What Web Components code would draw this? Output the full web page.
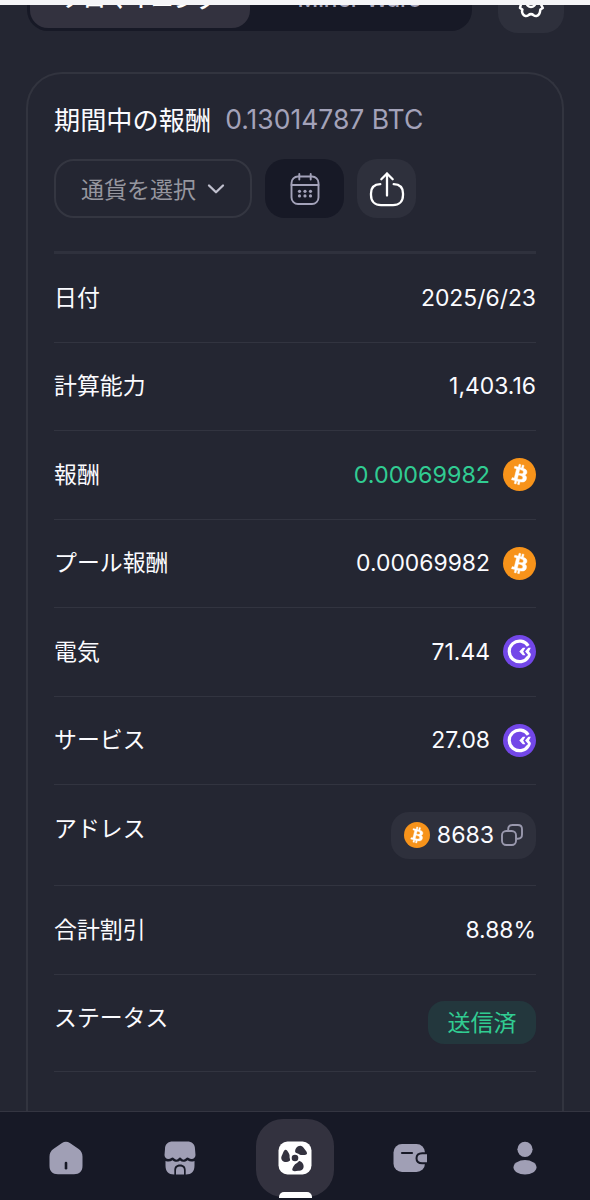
<!DOCTYPE html>
<html lang="ja">
<head>
<meta charset="utf-8">
<title>Rewards</title>
<style>
html,body{margin:0;padding:0;background:#242632}
body{width:590px;height:1200px;overflow:hidden;font-family:Inter,"Noto Sans CJK JP",sans-serif;color:#fbfbff}
</style>
</head>
<body>
<mining-app></mining-app>
<script>
const define = (name, html, init) => customElements.define(name, class extends HTMLElement {
  connectedCallback() {
    if (this.shadowRoot) return;
    const t = document.createElement('template');
    t.innerHTML = html;
    this.attachShadow({mode: 'open'}).append(t.content.cloneNode(true));
    if (init) init(this, this.shadowRoot);
  }
});

const blade = 'M17.200 11c-.4-3.200 2-6.500 5.300-6.300 2.200.2 3 1.900 4 3.300 1.200 1.600 2.700 2.800 2.500 4.800-.2 1.800-6.700 1.500-7.500.6-1.200-1.300-4-.9-4.300-2.400z';
const icons = {
  gear: ['0 0 34 34', '<path d="M14 4.500 17 7l3-2.500 5 2.400-.3 4 4 .5 1.300 5.600-3 2.400 1.800 3.600-2.400 1.500C26 25.500 26.500 27 25 29.300c-1.300 2-3.600 2.200-5.300.9-1.600-1.300-3.800-1.300-5.400 0-1.700 1.300-4 1.100-5.300-.9-1.500-2.300-1-3.800-.6-4.800L6 23l1-4-3-3 1.300-5 4-.5-.3-4z" fill="none" stroke="#fff" stroke-width="2.500" stroke-linejoin="round"/><circle cx="17" cy="17.500" r="4.500" fill="none" stroke="#fff" stroke-width="2.500"/>'],
  chevron: ['0 0 18 12', '<path d="m2 2.500 7 6.800L16 2.500" fill="none" stroke="#c0c0ce" stroke-width="2.300" stroke-linecap="round" stroke-linejoin="round"/>'],
  calendar: ['0 0 30 34', '<g fill="none" stroke="#a3a2b9" stroke-width="1.900" stroke-linecap="round"><rect x="1.500" y="4.500" width="27" height="27.500" rx="6.500"/><path d="M1.500 13h27M9.300 2v5.500M20.700 2v5.500"/></g><g fill="#a3a2b9"><circle cx="9.500" cy="19.300" r="1.600"/><circle cx="15" cy="19.300" r="1.600"/><circle cx="20.500" cy="19.300" r="1.600"/><circle cx="9.500" cy="23.900" r="1.600"/><circle cx="15" cy="23.900" r="1.600"/><circle cx="20.500" cy="23.900" r="1.600"/></g>'],
  share: ['0 0 36 36', '<path d="M18 24.500V2.500M12.300 8.300 18 2.500l5.700 5.800M11.300 13.200C5 13.400 2 17 2 22.500v1.500c0 6.500 4 10.200 10 10.200h12c6 0 10-3.700 10-10.200v-1.500c0-5.500-3-9.100-9.300-9.300" fill="none" stroke="#fff" stroke-width="2.300" stroke-linecap="round" stroke-linejoin="round"/>'],
  btc: ['0 0 32 32', '<circle cx="16" cy="16" r="16" fill="#f7931a"/><path fill="#fff" stroke="#fff" stroke-width=".45" fill-rule="evenodd" d="M23.189 14.020c.314-2.096-1.283-3.223-3.465-3.975l.708-2.840-1.728-.430-.690 2.765c-.454-.114-.920-.220-1.385-.326l.695-2.783L15.596 6l-.708 2.839c-.376-.086-.746-.170-1.104-.260l.002-.009-2.384-.595-.460 1.846s1.283.294 1.256.312c.700.175.826.638.805 1.006l-.806 3.235c.048.012.110.030.180.057l-.183-.045-1.130 4.532c-.086.212-.303.531-.793.410.018.025-1.256-.313-1.256-.313l-.858 1.978 2.250.561c.418.105.828.215 1.231.318l-.715 2.872 1.727.430.708-2.840c.472.127.930.245 1.378.357l-.706 2.828 1.728.430.715-2.866c2.948.558 5.164.333 6.097-2.333.752-2.146-.037-3.385-1.588-4.192 1.130-.260 1.980-1.003 2.207-2.538zm-3.950 5.538c-.533 2.147-4.148.986-5.320.695l.950-3.805c1.172.293 4.929.872 4.370 3.110zm.535-5.569c-.487 1.953-3.495.960-4.470.717l.860-3.450c.975.243 4.118.696 3.610 2.733z"/>'],
  coin: ['0 0 33 33', '<circle cx="16.500" cy="16.500" r="16.500" fill="#7347e8"/><path d="M25.200 10.800A10.300 10.300 0 1 0 25.300 21.800" fill="none" stroke="#fff" stroke-width="3.200"/><path d="M22.400 12.800h-2.600l-3.500 3.700 3.500 3.800h2.600l-2.200-3.800zM27.800 12.800h-2.500l-3.200 3.700 2.900 3.300-1.200 2 2.600 1.200c1-1.300 1.500-2.600 1.500-4l-1.900-2.500z" fill="#fff"/>'],
  copy: ['0 0 22 22', '<g fill="none" stroke="#9998ad" stroke-width="1.900"><path d="M7.200 6.500V5.200c0-2.700 1.500-4.200 4.200-4.200h5.400C19.500 1 21 2.500 21 5.200v5.400c0 2.700-1.500 4.200-4.200 4.200h-1.500"/><rect x="1" y="7" width="14" height="14" rx="4.200"/></g>'],
  home: ['0 0 34 34', '<path d="M13 1.900c2.500-1.500 5.400-1.500 7.900 0l8.400 5.800c2.900 2 4.200 4.400 4.200 8v9.100c0 5.500-3 8.500-8.500 8.500H9c-5.500 0-8.500-3-8.500-8.500v-9.100c0-3.600 1.300-6 4.200-8z" fill="#a09fb5"/><path d="M17 22v5.200" stroke="#171926" stroke-width="2.600" stroke-linecap="round"/>'],
  shop: ['0 0 32 34', '<path d="M9 .5h14c5 0 8 2.500 8 7.500l.5 6c0 2.300-1.500 4-4 4-2 0-3-1.500-4-1.500S21.300 18.700 19.500 18.700c-1.700 0-2.500-2.200-3.500-2.200s-1.800 2.200-3.500 2.200c-1.800 0-3-2.200-4-2.200S6.500 18 4.500 18c-2.500 0-4-1.700-4-4L1 8C1 3 4 .5 9 .5z" fill="#a09fb5"/><path d="M1.500 20c2.500 1 5 .8 7-.7 2.500 2 5.500 2 7.500.3 2 1.700 5 1.700 7.500-.3 2 1.500 4.500 1.700 7 .7v4.500c0 6-3 9-8.500 9h-.3v-4.300c0-3.500-1.900-5.700-5.700-5.700s-5.700 2.200-5.700 5.700v4.300H10c-5.500 0-8.500-3-8.500-9z" fill="#a09fb5"/><path d="M12 33.500v-4.300c0-2.300 1.300-3.700 4-3.700s4 1.400 4 3.700v4.300z" fill="#a09fb5"/>'],
  fan: ['0 0 34 34', `<rect x=".5" y=".5" width="33" height="33" rx="9" fill="#fff"/><g fill="#33323f"><circle cx="17" cy="17" r="3.300"/><path d="${blade}"/><path d="${blade}" transform="rotate(120 17 17)"/><path d="${blade}" transform="rotate(240 17 17)"/></g>`],
  wallet: ['0 0 34 30', '<rect x=".5" y="1" width="31.500" height="28" rx="8.500" fill="#a09fb5"/><path d="M34.500 10.200h-5.300c-3.700 0-5.700 1.800-5.700 5s2 5 5.700 5h5.300" fill="#a09fb5" stroke="#171926" stroke-width="2"/><path d="M9 10h10" stroke="#171926" stroke-width="2.200" stroke-linecap="round"/>'],
  user: ['0 0 24 34', '<circle cx="12" cy="8.300" r="7.600" fill="#a09fb5"/><ellipse cx="12" cy="26.300" rx="11.500" ry="7.300" fill="#a09fb5"/>']
};

define('app-icon', `<style>:host{display:block;flex:none}svg{display:block;width:100%;height:100%}</style>`, (el, root) => {
  const [box, body] = icons[el.getAttribute('name')];
  const h = document.createElement('template');
  h.innerHTML = `<svg viewBox="${box}" preserveAspectRatio="none">${body}</svg>`;
  root.append(h.content);
});

define('mode-bar', `<style>
:host{display:flex;flex:none;height:67px;overflow:hidden;align-items:flex-start;padding:0 26px 0 27px;justify-content:space-between}
.seg{display:flex;width:445px;height:61px;margin-top:-35px;border-radius:21px;background:#171926;box-sizing:border-box;padding:3px}
.seg div{flex:1;display:flex;align-items:center;justify-content:center;border-radius:18px;font-size:22.700px;font-weight:500;line-height:30px;color:#a3a2b9;white-space:nowrap;box-sizing:border-box;padding-bottom:3px}
.seg .on{background:#33323f;color:#fff}
.gear{width:66px;height:66px;margin-top:-38px;border-radius:20px;background:#2e303c;display:flex;align-items:center;justify-content:center}
app-icon{width:34px;height:34px;margin-top:3px}
</style><div class="seg"><div class="on">ソロマイニング</div><div>Miner Wars</div></div><div class="gear"><app-icon name="gear"></app-icon></div>`);

define('reward-row', `<style>
:host{display:flex;box-sizing:border-box;height:var(--h,88.500px);padding:26.500px 0;border-bottom:1px solid #323440;align-items:flex-start;justify-content:space-between}
.label{font-size:22.900px;line-height:34px}
.value{display:flex;align-items:center;gap:13px;font-size:22.900px;line-height:34px;height:34px}
::slotted(app-icon){width:33px;height:33px}
</style><span class="label"></span><div class="value"><slot></slot></div>`, (el, root) => {
  root.querySelector('.label').textContent = el.getAttribute('label');
});

define('address-chip', `<style>
:host{display:flex;box-sizing:border-box;width:145px;height:47px;align-self:flex-start;border-radius:18px;background:#2e303c;align-items:center;padding:0 13px;justify-content:space-between;line-height:34px;font-size:23.200px}
.b{width:26px;height:26px}.c{width:22px;height:22px}
</style><app-icon class="b" name="btc"></app-icon><span><slot></slot></span><app-icon class="c" name="copy"></app-icon>`);

define('status-chip', `<style>
:host{display:flex;box-sizing:border-box;width:108px;height:43px;align-self:flex-start;border-radius:16px;background:#23373d;color:#31cc92;font-size:23px;align-items:center;justify-content:center}
</style><slot></slot>`);

define('reward-card', `<style>
:host{display:block;flex:1;min-height:0;margin:0 26px;box-sizing:border-box;border:2px solid #32343f;border-bottom:0;border-radius:36px 36px 0 0;padding:26px 26px 0}
header{display:flex;align-items:center;height:38px;gap:14px;white-space:nowrap}
h1{margin:0;font-size:26.200px;font-weight:400}
header span{font-size:26.500px;color:#a3a2b9;font-weight:400}
.tools{display:flex;margin-top:21px;height:59px;gap:13px}
.tools>div{display:flex;align-items:center;justify-content:center;box-sizing:border-box}
.select{width:198px;border:2px solid #343641;border-radius:20px;gap:11px;font-size:23px;color:#96969f}
.select span{padding-bottom:2px}
.cal{width:79px;border-radius:20px;background:#171926}
.share{width:59px;border-radius:20px;background:#2e303c}
.line{height:3px;margin-top:33px;background:#2f313d}
.chev{width:18px;height:12px}.ci{width:30px;height:34px}.si{width:36px;height:36px}
.green{color:#31cc92;font-size:23.300px}
</style>
<header><h1>期間中の報酬</h1><span>0.13014787 BTC</span></header>
<div class="tools"><div class="select"><span>通貨を選択</span><app-icon class="chev" name="chevron"></app-icon></div><div class="cal"><app-icon class="ci" name="calendar"></app-icon></div><div class="share"><app-icon class="si" name="share"></app-icon></div></div>
<div class="line"></div>
<reward-row label="日付">2025/6/23</reward-row>
<reward-row label="計算能力">1,403.16</reward-row>
<reward-row label="報酬"><span class="green">0.00069982</span><app-icon name="btc"></app-icon></reward-row>
<reward-row label="プール報酬"><span>0.00069982</span><app-icon name="btc"></app-icon></reward-row>
<reward-row label="電気"><span>71.44</span><app-icon name="coin"></app-icon></reward-row>
<reward-row label="サービス"><span>27.08</span><app-icon name="coin"></app-icon></reward-row>
<reward-row label="アドレス" style="--h:101px"><address-chip>8683</address-chip></reward-row>
<reward-row label="合計割引">8.88%</reward-row>
<reward-row label="ステータス" style="--h:97px"><status-chip>送信済</status-chip></reward-row>`);

define('tab-item', `<style>
:host{display:flex;flex:none;position:relative;width:78px;height:78px;border-radius:27px;align-items:center;justify-content:center}
:host([active]){background:#33323f}
:host([active])::after{content:"";position:absolute;left:22.500px;bottom:-1px;width:33px;height:6px;border-radius:5px 5px 0 0;background:#fff}
</style><slot></slot>`);

define('tab-bar', `<style>
:host{display:flex;flex:none;height:89px;box-sizing:border-box;border-top:1px solid #343541;background:#171926;padding:7px 26.500px 0;justify-content:space-between}
app-icon{width:34px;height:34px}.shop{width:32px}.wallet{height:30px}.user{width:24px}
</style><tab-item><app-icon name="home"></app-icon></tab-item><tab-item><app-icon class="shop" name="shop"></app-icon></tab-item><tab-item active><app-icon name="fan"></app-icon></tab-item><tab-item><app-icon class="wallet" name="wallet"></app-icon></tab-item><tab-item><app-icon class="user" name="user"></app-icon></tab-item>`);

define('mining-app', `<style>
:host{display:flex;flex-direction:column;width:590px;height:1200px;box-sizing:border-box;border-top:5px solid #f5f5f7;background:#242632;overflow:hidden}
main{display:flex;flex-direction:column;flex:1;min-height:0;overflow:hidden}
</style><main><mode-bar></mode-bar><reward-card></reward-card></main><tab-bar></tab-bar>`);
</script>
</body>
</html>
